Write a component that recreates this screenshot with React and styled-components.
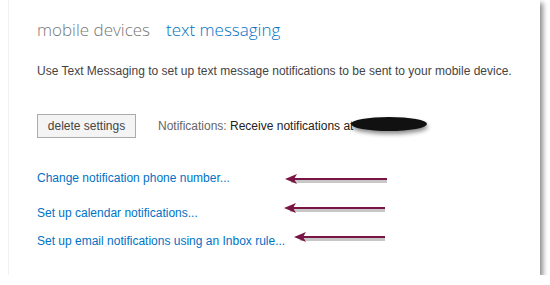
import React from "react"
import styled, { createGlobalStyle } from "styled-components"

const Global = createGlobalStyle`
    body {
        margin: 0;
        background: #ffffff;
        font-family: "Liberation Sans", Arial, sans-serif;
    }
`
const Panel = styled.div`
    position: relative;
    width: 540px;
    height: 275px;
    background: #ffffff;
    box-shadow: 3px 3px 5px rgba(0, 0, 0, 0.45);
`
const Content = styled.div`
    margin-left: 8px;
    height: 100%;
    border-left: 1px solid #f1f1f1;
    padding: 16px 0 0 28px;
    box-sizing: border-box;
`
const Tabs = styled.div`
    display: flex;
    gap: 16px;
    font-family: "Open Sans", sans-serif;
    font-weight: 300;
    font-size: 17px;
    line-height: 27px;
`
const Tab = styled.span`
    color: ${(p) => (p.$active ? "#0072c6" : "#777777")};
`
const Intro = styled.p`
    margin: 21px 0 0;
    font-size: 12px;
    color: #444444;
`
const Row = styled.div`
    display: flex;
    align-items: center;
    gap: 22px;
    margin-top: 36px;
`
const Button = styled.button`
    width: 99px;
    height: 24px;
    padding: 0;
    border: 1px solid #ababab;
    background: #f4f4f4;
    color: #444444;
    font-family: inherit;
    font-size: 12px;
`
const Status = styled.span`
    position: relative;
    font-size: 12px;
    color: #666666;

    em {
        font-style: normal;
        color: #222222;
    }
`
const Scribble = styled.span`
    position: absolute;
    left: 193px;
    top: -2px;
    width: 76px;
    height: 14px;
    border-radius: 50%;
    background: #111111;
    box-shadow: 1px 3px 4px rgba(0, 0, 0, 0.45);
`
const Links = styled.div`
    display: flex;
    flex-direction: column;
    margin-top: 33px;
`
const Link = styled.a`
    display: block;
    height: ${(p) => p.$h}px;
    font-size: 12px;
    color: #0072c6;
    text-decoration: none;
`
const Arrow = styled.svg`
    position: absolute;
    overflow: visible;
`

const arrows = [
    { x: 285, y: 179, w: 102 },
    { x: 284, y: 208, w: 101 },
    { x: 294, y: 237, w: 91 },
]

export default function App() {
    return (
        <>
            <Global />
            <Panel>
                <Content>
                    <Tabs>
                        <Tab>mobile devices</Tab>
                        <Tab $active>text messaging</Tab>
                    </Tabs>
                    <Intro>Use Text Messaging to set up text message notifications to be sent to your mobile device.</Intro>
                    <Row>
                        <Button>delete settings</Button>
                        <Status>
                            Notifications: <em>Receive notifications at</em>
                            <Scribble />
                        </Status>
                    </Row>
                    <Links>
                        <Link href="#" $h={35}>Change notification phone number...</Link>
                        <Link href="#" $h={28}>Set up calendar notifications...</Link>
                        <Link href="#" $h={20}>Set up email notifications using an Inbox rule...</Link>
                    </Links>
                </Content>
                {arrows.map((a, i) => (
                    <Arrow key={i} width={a.w} height={10} style={{ left: a.x, top: a.y - 5 }}>
                        <line x1="6" y1="7.5" x2={a.w} y2="7.5" stroke="rgba(0,0,0,0.22)" strokeWidth="3" />
                        <line x1="6" y1="5" x2={a.w} y2="5" stroke="#7a1444" strokeWidth="2" />
                        <polygon points="0,5 12,0 9,5 12,10" fill="#7a1444" />
                    </Arrow>
                ))}
            </Panel>
        </>
    )
}
